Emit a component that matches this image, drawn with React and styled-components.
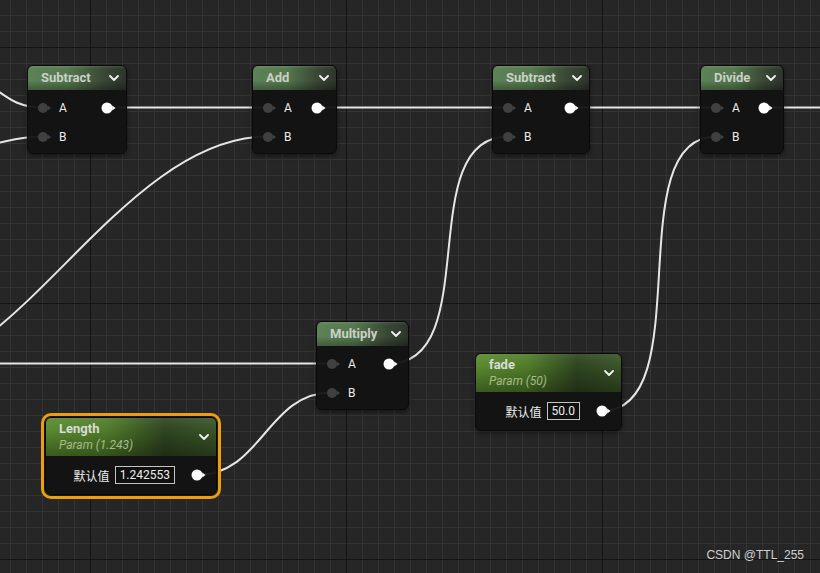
import React from "react";
import styled, { createGlobalStyle } from "styled-components";

const GlobalStyle = createGlobalStyle`
  html, body {
    margin: 0;
    padding: 0;
    background: #262626;
  }
  body {
    font-family: Roboto, "Noto Sans CJK SC", sans-serif;
  }
`;

const mathNodes = [
  { id: "sub1", title: "Subtract", x: 27, y: 65, w: 100 },
  { id: "add", title: "Add", x: 252, y: 65, w: 85 },
  { id: "sub2", title: "Subtract", x: 492, y: 65, w: 98 },
  { id: "div", title: "Divide", x: 700, y: 65, w: 84 },
  { id: "mul", title: "Multiply", x: 316, y: 321, w: 93 },
];

const paramNodes = [
  { id: "length", title: "Length", sub: "Param (1.243)", value: "1.242553", x: 45, y: 417, w: 172, selected: true },
  { id: "fade", title: "fade", sub: "Param (50)", value: "50.0", x: 475, y: 353, w: 147 },
];

const wires = [
  "M -40 78 C 0 78 0 107.5 43 107.5",
  "M -30 146 C 0 146 10 136.5 43 136.5",
  "M 107 107.5 L 268 107.5",
  "M 317 107.5 L 508 107.5",
  "M 570 107.5 L 716 107.5",
  "M 764 107.5 L 830 107.5",
  "M -90 368 C 20 368 125 136.5 268 136.5",
  "M -10 363.5 L 332 363.5",
  "M 197 475 C 262 475 267 392.5 332 392.5",
  "M 389 363.5 C 485 363.5 412 136.5 508 136.5",
  "M 602 411 C 700 411 618 136.5 716 136.5",
];

const Chevron = () => (
  <ChevronSvg viewBox="0 0 10 6" width="10" height="6">
    <polyline points="1,1 5,5 9,1" fill="none" stroke="#f2f2f2" strokeWidth="1.8" strokeLinecap="round" strokeLinejoin="round" />
  </ChevronSvg>
);

const InPin = () => (
  <svg width="14" height="12" viewBox="0 0 14 12">
    <circle cx="5" cy="6" r="5" fill="#404040" />
    <polygon points="9.8,3.4 13,6 9.8,8.6" fill="#404040" />
  </svg>
);

const OutPin = () => (
  <svg width="15" height="12" viewBox="0 0 15 12">
    <circle cx="6" cy="6" r="5.5" fill="#ffffff" />
    <polygon points="11.2,3.5 14.5,6 11.2,8.5" fill="#ffffff" />
  </svg>
);

const MathNode = ({ node }) => (
  <Node $x={node.x} $y={node.y} $w={node.w}>
    <Header>
      <Title>{node.title}</Title>
      <Chevron />
    </Header>
    <Body>
      <Row>
        <InSlot>
          <InPin />
          <PinLabel>A</PinLabel>
        </InSlot>
        <OutSlot>
          <OutPin />
        </OutSlot>
      </Row>
      <Row>
        <InSlot>
          <InPin />
          <PinLabel>B</PinLabel>
        </InSlot>
      </Row>
    </Body>
  </Node>
);

const ParamNode = ({ node }) => (
  <Node $x={node.x} $y={node.y} $w={node.w} $selected={node.selected}>
    <Header $param>
      <TitleCol>
        <Title $param>{node.title}</Title>
        <SubTitle>{node.sub}</SubTitle>
      </TitleCol>
      <Chevron />
    </Header>
    <Body $param>
      <Row $param>
        <ValueLabel>默认值</ValueLabel>
        <ValueBox>{node.value}</ValueBox>
        <OutSlot>
          <OutPin />
        </OutSlot>
      </Row>
    </Body>
  </Node>
);

export default function App() {
  return (
    <>
      <GlobalStyle />
      <Canvas>
        <Wires width="820" height="573" viewBox="0 0 820 573">
          {wires.map((d, i) => (
            <path key={i} d={d} fill="none" stroke="#e6e6e6" strokeWidth="2" />
          ))}
        </Wires>
        {mathNodes.map((n) => (
          <MathNode key={n.id} node={n} />
        ))}
        {paramNodes.map((n) => (
          <ParamNode key={n.id} node={n} />
        ))}
        <Watermark>CSDN @TTL_255</Watermark>
      </Canvas>
    </>
  );
}

const Canvas = styled.div`
  position: relative;
  width: 820px;
  height: 573px;
  overflow: hidden;
  background-color: #262626;
  background-image: linear-gradient(to right, #141414 1px, transparent 1px),
    linear-gradient(to bottom, #141414 1px, transparent 1px),
    linear-gradient(to right, #343434 1px, transparent 1px),
    linear-gradient(to bottom, #343434 1px, transparent 1px);
  background-size: 256px 256px, 256px 256px, 16px 16px, 16px 16px;
  background-position: 90px 0, 0 47px, 10px 0, 0 15px;
`;

const Wires = styled.svg`
  position: absolute;
  left: 0;
  top: 0;
`;

const Node = styled.div`
  position: absolute;
  left: ${(p) => p.$x}px;
  top: ${(p) => p.$y}px;
  width: ${(p) => p.$w}px;
  box-sizing: border-box;
  border: 1px solid #0a0a0a;
  border-radius: 6px;
  background: rgba(17, 18, 17, 0.95);
  box-shadow: ${(p) =>
    p.$selected ? "0 0 0 1px #151515, 0 0 0 4px #eb9e10" : "0 2px 5px rgba(0, 0, 0, 0.45)"};
  overflow: hidden;
`;

const Header = styled.div`
  display: flex;
  align-items: center;
  justify-content: space-between;
  height: ${(p) => (p.$param ? 38 : 24)}px;
  padding: 0 7px 0 13px;
  background: ${(p) =>
    p.$param
      ? `linear-gradient(180deg, rgba(255,255,255,0.08) 0, rgba(0,0,0,0) 30%, rgba(0,0,0,0.35) 100%),
         linear-gradient(90deg, #5b8a30 0%, #517d2a 35%, #2f4520 70%, #3a5528 100%)`
      : `linear-gradient(180deg, rgba(255,255,255,0.1) 0, rgba(255,255,255,0) 3px, rgba(0,0,0,0) 60%, rgba(0,0,0,0.3) 100%),
         linear-gradient(90deg, #5d8256 0%, #56784f 40%, #3a4a36 75%, #2d352b 100%)`};
`;

const TitleCol = styled.div`
  display: flex;
  flex-direction: column;
`;

const Title = styled.div`
  font-size: 13px;
  font-weight: bold;
  line-height: 16px;
  color: ${(p) => (p.$param ? "#dadada" : "#c9d0c6")};
  white-space: nowrap;
`;

const SubTitle = styled.div`
  font-size: 12px;
  font-style: italic;
  line-height: 16px;
  color: #a3bd86;
  white-space: nowrap;
`;

const ChevronSvg = styled.svg`
  display: block;
  flex: none;
`;

const Body = styled.div`
  padding: ${(p) => (p.$param ? "4px 0" : "3px 0 2px")};
`;

const Row = styled.div`
  display: flex;
  align-items: center;
  justify-content: ${(p) => (p.$param ? "flex-end" : "space-between")};
  height: ${(p) => (p.$param ? 30 : 29)}px;
`;

const InSlot = styled.div`
  display: flex;
  align-items: center;
  padding-left: 10px;

  svg {
    display: block;
  }
`;

const PinLabel = styled.span`
  margin-left: 7px;
  font-size: 12px;
  color: #ececec;
`;

const OutSlot = styled.div`
  display: flex;
  align-items: center;
  padding-right: 10px;

  svg {
    display: block;
  }
`;

const ValueLabel = styled.span`
  font-family: "Noto Sans CJK SC", sans-serif;
  font-size: 12px;
  color: #ececec;
`;

const ValueBox = styled.div`
  box-sizing: border-box;
  height: 18px;
  margin: 0 16px 0 5px;
  padding: 0 4px;
  border: 1px solid #c4c4c4;
  background: #101010;
  font-size: 12px;
  line-height: 16px;
  color: #ececec;
`;

const Watermark = styled.div`
  position: absolute;
  right: 16px;
  top: 548px;
  font-family: "Liberation Sans", Arial, sans-serif;
  font-size: 12px;
  color: #cfcfcf;
`;
